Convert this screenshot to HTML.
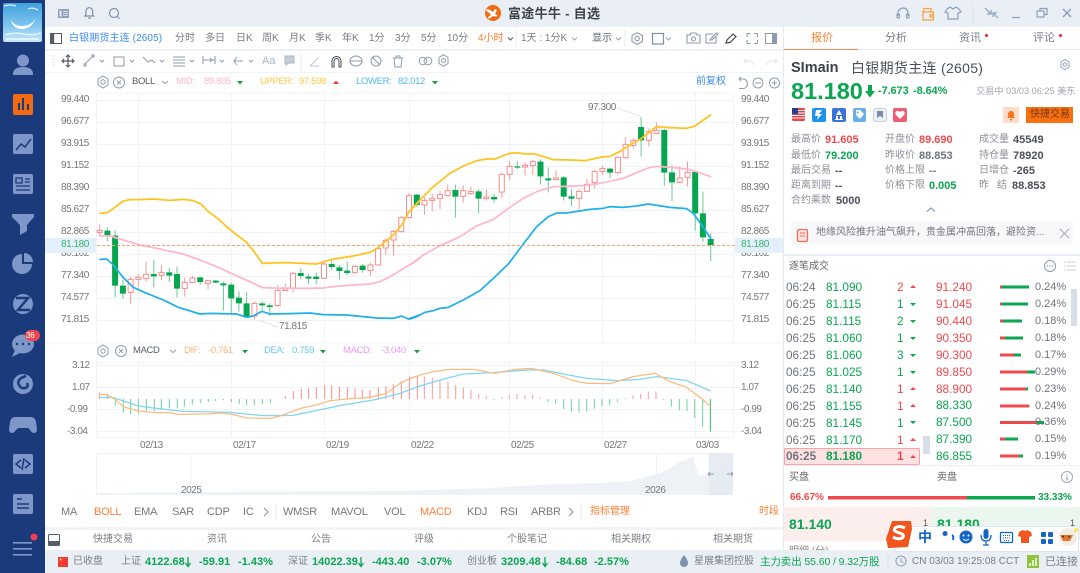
<!DOCTYPE html>
<html><head><meta charset="utf-8"><style>
html,body{margin:0;padding:0}
body{width:1080px;height:573px;overflow:hidden;position:relative;background:#fff;font-family:"Liberation Sans","Noto Sans CJK SC",sans-serif;color:#666;font-size:12px}
.b{position:absolute}
.t{position:absolute;white-space:nowrap;line-height:14px;height:14px}
.ax{font-size:10px;letter-spacing:-.45px;color:#777}
.lb{font-size:9.5px;letter-spacing:-.35px}
.m{font-size:11px;letter-spacing:-.2px}
.g{color:#0aa650}.r{color:#f0494c}.o{color:#ff7f33}
.bd{font-weight:bold}
.tb{font-size:10px;color:#787c85}
.st{font-size:10px;color:#8c9098}
.v{font-size:11px;font-weight:bold;color:#4b505a}
.sb{font-size:10px;color:#7a7f88}
.tm{font-size:11.8px;color:#70757e}
.pc{font-size:11px;color:#70757e}
.d{font-size:11.8px}
</style></head><body>
<div class="b" style="left:0;top:0;width:45px;height:573px;background:#1a3a7c"></div>
<div class="b" style="left:45px;top:0;width:1035px;height:27px;background:#e9eff5"></div>
<div class="b" style="left:45px;top:49px;width:738px;height:1.5px;background:#eef1f5"></div>
<div class="b" style="left:45px;top:72px;width:738px;height:1px;background:#f1f3f6"></div>
<div class="b" style="left:783px;top:27px;width:1px;height:523px;background:#e6eaf0"></div>
<div class="b" style="left:784px;top:49px;width:296px;height:1px;background:#e9ecf1"></div>
<div class="b" style="left:784px;top:49px;width:74px;height:1px;background:#ff8a45"></div>
<div class="b" style="left:784px;top:254px;width:296px;height:1.5px;background:#e9eef6"></div>
<div class="b" style="left:45px;top:527px;width:738px;height:3px;background:#f1f3f6"></div>
<div class="b" style="left:45px;top:550px;width:1035px;height:23px;background:#e9eff5"></div>
<div class="b" style="left:784px;top:465px;width:296px;height:1px;background:#eaedf2"></div>
<div class="b" style="left:784px;top:507px;width:147px;height:34px;background:#fdeeee"></div>
<div class="b" style="left:931px;top:507px;width:149px;height:34px;background:#ebf7ee"></div>
<div class="b" style="left:791px;top:221px;width:282px;height:24px;background:#f7f8fa;border-radius:2px"></div>
<div class="b" style="left:735px;top:238px;width:48px;height:15px;background:#e3f0fb"></div>
<div class="b" style="left:45px;top:238px;width:52px;height:15px;background:#e3f0fb"></div>

<svg class="b" style="left:0;top:0" width="1080" height="573" viewBox="0 0 1080 573" fill="none">
<defs><linearGradient id="sky" x1="0" y1="0" x2="0" y2="1"><stop offset="0" stop-color="#3fa0de"/><stop offset=".55" stop-color="#7cc4ee"/><stop offset="1" stop-color="#c8e6f7"/></linearGradient></defs>
<!-- avatar -->
<rect x="3" y="3" width="39" height="39" rx="2" fill="url(#sky)"/>
<path d="M10 19q4 11 13 10 9-1 13-11-4 7-12 8-9 1-14-7z" fill="#fff"/>
<path d="M4 6q6-2 12 0M28 9q5-2 10 1M5 35q10-3 18-1 9 2 18-1M6 39h33" stroke="#fff" stroke-width="1.4" opacity=".75"/>
<!-- sidebar -->
<g fill="#7d97c8">
<circle cx="23" cy="60.500" r="6"/><path d="M13 75q0-1 0-2 1-6 10-6 9 0 10 6v2z"/>
<rect x="13" y="94" width="20" height="21" rx="2" fill="#f26a12"/>
<rect x="13" y="134" width="20" height="20" rx="2"/>
<rect x="13" y="174" width="20" height="20" rx="2"/>
<path d="M12 214h22v3l-7 8v6l-7 4v-10l-8-8z"/>
<path d="M22 254a10 10 0 1 0 10 10h-10z"/><path d="M24 253v9h9a9 9 0 0 0-9-9z"/>
<circle cx="23" cy="304" r="10"/>
<ellipse cx="23" cy="344" rx="11" ry="9.500"/><path d="M15 350l-3 7 8-4z"/>
<circle cx="23" cy="384" r="10"/>
<path d="M15 417h16q4 0 5 5l1 7q0 4-3 4-2 0-4-3l-2-2h-10l-2 2q-2 3-4 3-3 0-3-4l1-7q1-5 5-5z"/>
<rect x="13" y="454" width="20" height="20" rx="2"/>
<rect x="13" y="494" width="20" height="20" rx="2"/>
<path d="M13 542h19v1.600h-19zM13 548h19v1.600h-19zM13 554h19v1.600h-19z"/>
</g>
<path d="M19 110v-7M23 110v-12M28 110v-6" stroke="#1a3a7c" stroke-width="2"/>
<path d="M16 150l5-6 4 3 6-8" stroke="#1a3a7c" stroke-width="1.500"/>
<path d="M16 178h6v5h-6zM16 186h14M16 190h14M25 179h5M25 182h5" stroke="#1a3a7c" stroke-width="1.300"/>
<path d="M16 298h12l-10 12h12" stroke="#1a3a7c" stroke-width="2.500"/>
<path d="M26 376q-10 3-7 9 2 4 6 3 4-1 2-5" stroke="#1a3a7c" stroke-width="2.500"/>
<circle cx="17" cy="344" r="1.200" fill="#1a3a7c"/><circle cx="23" cy="344" r="1.200" fill="#1a3a7c"/><circle cx="29" cy="344" r="1.200" fill="#1a3a7c"/>
<path d="M21 460l-5 4 5 4M25 460l5 4-5 4M24 458l-2 12" stroke="#1a3a7c" stroke-width="1.500"/>
<path d="M17 499h5M17 504h12M17 508h12" stroke="#1a3a7c" stroke-width="1.500"/>
<circle cx="34" cy="537" r="3.500" fill="#f04050"/>
<rect x="25" y="330" width="15" height="11" rx="5.500" fill="#f0474c"/>
<!-- top bar left icons -->
<g stroke="#7f93ad" stroke-width="1.200">
<rect x="58" y="9" width="11" height="9" fill="#8fa2bb" stroke="none"/><rect x="59.500" y="10.500" width="2" height="6" fill="#e9eff5" stroke="none"/><path d="M63 11.500h5M63 13.500h5M63 15.500h5" stroke="#e9eff5" stroke-width=".8"/>
<path d="M85 16c1-1 1-2 1-5a3.300 3.300 0 0 1 6.600 0c0 3 0 4 1 5zM88 18h3"/>
<circle cx="114" cy="13" r="4.500"/><path d="M117.500 16.500l2 2"/>
</g>
<!-- logo -->
<circle cx="493" cy="13" r="8" fill="#f26a12"/><path d="M487 9q4 1 6 3l2-3 2 1-2 4 3 2q-3 1-5 0l-4 3-1-2 3-2q-2-3-5-4z" fill="#fff"/>
<!-- top right -->
<g stroke="#8ba0bc" stroke-width="1.200">
<path d="M898 16v-3a5 5 0 0 1 10 0v3"/><rect x="897" y="14" width="2.500" height="4" rx="1"/><rect x="906.500" y="14" width="2.500" height="4" rx="1"/>
<path d="M947 9l3-2 3 2 3-2 3 2 2 3-3 1v6h-10v-6l-3-1z"/>
<path d="M985 8l6 6M991 10v4h-4M998 18l-5-5M993 17v-4h4" />
<path d="M1012 17.500h8"/><rect x="1037" y="11" width="7" height="6"/><path d="M1040 11v-2.500h7v6h-3"/>
<path d="M1063 9l8 8M1071 9l-8 8" stroke-width="1.400"/>
</g>
<path d="M973 5v18" stroke="#dbe2ea"/>
<path d="M923 12h10.500v8h-10.500zM923 12l1-3.500 7 0v3.500M930 15h3.500v2h-3.500z" stroke="#f7a23a" stroke-width="1.200"/>
<!-- toolbar 1 -->
<rect x="50.500" y="33.500" width="11" height="10" stroke="#555c66"/><rect x="51" y="34" width="3.200" height="9" fill="#555c66"/>
<path d="M508 37.500l2.500 2.500 2.500-2.500" stroke="#555c66"/>
<path d="M572 37.500l2.500 2.500 2.500-2.500M616 37.500l2.500 2.500 2.500-2.500M666 37.500l2.500 2.500 2.500-2.500" stroke="#9aa5b4"/>
<path d="M516 30v17M625 30v17" stroke="#e5e9ef"/>
<g stroke="#8f9bad" stroke-width="1.100">
<path d="M632 35.500l5-2.800 5.500 2.800v6l-5.500 3-5-3z"/><circle cx="637.200" cy="38.500" r="2.200"/>
<path d="M687 35h3l1-2h5l1 2h3v8h-13z"/><circle cx="693.500" cy="39" r="2"/>
<path d="M706 34h7M706 34v9h10v-6M710 40l6-7 2 1-6 6z"/>
<path d="M747 33.500h3.500M747 33.500v3.500M757.500 33.500h-3.500M757.500 33.500v3.500M747 43.500h3.500M747 43.500v-3.500M757.500 43.500h-3.500M757.500 43.500v-3.500"/>
<path d="M765.500 33.500h11v10h-11z"/><rect x="772" y="34" width="4" height="9" fill="#8f9bad" stroke="none"/>
</g>
<rect x="652.500" y="33.500" width="11" height="10.500" stroke="#7b8ea8" stroke-width="1.200"/>
<path d="M726 43l1-3 6-6 3 2.500-6 6z" stroke="#444b55" stroke-width="1.200"/>
<!-- toolbar 2 -->
<path d="M52 56h3M52 59h3M52 62h3M52 65h3" stroke="#e3e6ea"/>
<g stroke="#555c66" stroke-width="1.200"><path d="M68 55v12M62 61h12"/><path d="M66 57l2-2 2 2M66 65l2 2 2-2M64 59l-2 2 2 2M72 59l2 2-2 2" /></g>
<g stroke="#8f9bad" stroke-width="1">
<path d="M85 64l8-8M84 64h2v2h-2zM92 55h2v2h-2z"/><path d="M100 60l2 2 2-2M130 60l2 2 2-2M160 60l2 2 2-2M190 60l2 2 2-2M220 60l2 2 2-2M249 60l2 2 2-2"/>
<rect x="114" y="57" width="10" height="9"/>
<path d="M143 57l5 5 4-2 3 3" /><path d="M173 57h12M173 60h12M173 63h12M173 66h12"/>
<path d="M203 60h12M203 56v8M215 56v8M210 58l2 2-2 2"/><path d="M243 61h-9l3-4M234 61l3 4"/>
<path d="M285 56h9v7h-5l-3 2v-2h-1z" fill="#c5cdd8" stroke="#aab5c4"/>
<path d="M301 53v18" stroke="#e5e9ef"/>
<path d="M310 66l8-8M310 66h9" stroke="#bfc7d2"/>
<path d="M332 67v-6a4.500 4.500 0 0 1 9 0v6h-2v-6a2.500 2.500 0 0 0-5 0v6z" stroke="#444b55"/>
<ellipse cx="356" cy="61" rx="6" ry="5"/><path d="M350 61h12"/>
<circle cx="376" cy="61" r="5"/><path d="M372 57l8 8"/>
<path d="M394 58h8l-1 9h-6zM393 58h10M396 58v-2h4v2"/>
<circle cx="423" cy="61" r="3.800"/><circle cx="428" cy="61" r="3.800"/>
<path d="M439 57.500l4.500-2.800 4.500 2.800v6l-4.500 2.800-4.500-2.800z"/><circle cx="443.500" cy="60.500" r="2"/>
</g>
<path d="M746 63l-2-2 2-2M744 61h6q3 0 4 4M775 63l2-2-2-2M777 61h-6q-3 0-4 4" stroke="#e3e6ea" stroke-width="1.200"/>
<!-- boll row icons -->
<g stroke="#8f9bad" stroke-width="1">
<path d="M98 79l5-3 5 3v6l-5 3-5-3z"/><circle cx="103" cy="82" r="2.200"/>
<circle cx="119" cy="82.500" r="5.500"/><path d="M117 80.500l4 4M121 80.500l-4 4"/>
<path d="M162 81l3 2.500 3-2.500"/>
<path d="M739 79h5a5 5 0 0 1 0 9.500h-5M741 77l-2 2 2 2" />
<circle cx="758" cy="83" r="5"/><path d="M755 83h6"/>
<circle cx="774.500" cy="83" r="5"/><path d="M772 83h5M774.500 80.500v5"/>
</g>
<path d="M237 81h6l-3 3.500z" fill="#1a9c3a"/><path d="M333 84h6l-3-3.500z" fill="#ef3b3b"/><path d="M432 81h6l-3 3.500z" fill="#1a9c3a"/>

<!-- main chart grid -->
<g stroke="#eff3f8">
<path d="M96.500 93H733M96.500 100.500H733M96.500 122.500H733M96.500 144.500H733M96.500 166.500H733M96.500 188.500H733M96.500 210.500H733M96.500 232.500H733M96.500 254.500H733M96.500 276.500H733M96.500 298.500H733M96.500 320.500H733"/>
<path d="M96.500 93V343M138.500 93V343M231.500 93V343M324.500 93V343M409.500 93V343M509.500 93V343M602.500 93V343M695.500 93V343M733.500 93V343"/>
<path d="M96.500 362H741M96.500 365.500H741M96.500 387.500H741M96.500 409.500H741M96.500 431.500H741M96.500 437.500H733"/>
<path d="M96.500 362V437M138.500 362V437M231.500 362V437M324.500 362V437M409.500 362V437M509.500 362V437M602.500 362V437M695.500 362V437M733.500 362V437"/>
</g>
<path d="M45 343H783" stroke="#f1f3f6"/>
<!-- mini chart -->
<path d="M96.500 453.500H733M96.500 453V495M191 453V487M656.500 453V486" stroke="#eef1f5"/>
<path d="M96 493L200 492 400 491 490 488 520 486 560 484 600 483 630 481 650 476 660 473 670 468 680 462 688 459 693 456 696 468 699 476 709 473 720 470 733 466V495H96z" fill="#eef2f7"/>
<rect x="709" y="453" width="24" height="42" fill="#e4e9f0" opacity=".85"/>
<path d="M708 474h6M708 474l2-2M708 474l2 2M727 474h6M733 474l-2-2M733 474l-2 2" stroke="#8a9fb8" stroke-width=".9"/>
<!-- candles -->
<g transform="translate(0 90) scale(1 .33333)">
<path stroke="#f89a9a" d="M99.7 403V440M130.600 560V642M138.300 552V592M146.100 515V575M161.500 525V570M184.700 563V620M192.500 558V580M208 570V598M254.400 634V690M277.600 585V650M285.300 580V603M293 546V608M324 518V567M354.900 525V553M370.400 518V557M378.100 472V527M385.800 445V495M393.600 420V498M401.300 378V427M409 310V385M424.500 322V374M432.200 310V364M440 302V357M447.700 283V320M463.200 286V338M470.900 290V315M486.400 298V332M501.800 247V323M509.600 212V270M525 218V257M532.800 210V255M556 241V272M579.200 298V360M586.900 267V306M594.700 240V295M602.400 228V255M617.900 198V253M625.600 142V206M633.300 145V175M648.800 115V170M656.500 98V132M679.700 230V280M687.500 215V290"/>
<path fill="#fff" stroke="#f58d8d" vector-effect="non-scaling-stroke" d="M97.200 421h5V427h-5zM128.100 568h5V607h-5zM135.800 562h5V568h-5zM143.600 553h5V565h-5zM159 547h5V556h-5zM182.200 577h5V595h-5zM190 564h5V577h-5zM205.500 572h5V580h-5zM251.900 640h5V678h-5zM275.100 601h5V647h-5zM282.800 597h5V602h-5zM290.500 550h5V595h-5zM321.500 522h5V565h-5zM352.400 529h5V547h-5zM367.900 525h5V541h-5zM375.600 476h5V525h-5zM383.300 451h5V474h-5zM391.100 424h5V450h-5zM398.800 383h5V425h-5zM406.500 317h5V383h-5zM422 332h5V345h-5zM429.700 325h5V331h-5zM437.500 314h5V325h-5zM445.200 302h5V317h-5zM460.700 302h5V319h-5zM468.400 305h5V311h-5zM483.900 321h5V326h-5zM499.300 253h5V306h-5zM507.100 229h5V253h-5zM522.500 226h5V231h-5zM530.300 215h5V227h-5zM553.500 264h5V269h-5zM576.700 304h5V325h-5zM584.400 283h5V304h-5zM592.200 244h5V278h-5zM599.900 236h5V244h-5zM615.400 202h5V248h-5zM623.100 163h5V203h-5zM630.800 152h5V166h-5zM646.300 125h5V151h-5zM654 121h5V130h-5zM677.200 264h5V277h-5zM685 247h5V262h-5z"/>
<path stroke="#6cc992" d="M107.400 412V455M115.100 420V622M122.900 570V627M153.800 510V592M169.300 533V576M177 530V622M200.200 560V585M215.700 570V580M223.400 574V662M231.200 578V670M238.900 604V665M246.600 606V682M262.100 634V660M269.800 640V677M300.800 534V568M308.500 552V583M316.200 548V582M331.700 510V540M339.400 525V568M347.200 515V557M362.600 522V548M416.800 312V350M455.400 284V383M478.600 298V370M494.100 312V338M517.300 214V237M540.500 208V283M548.300 232V307M563.700 258V332M571.500 298V348M610.100 234V265M641.100 80V200M664.300 116V288M672 225V333M695.200 242V422M702.900 305V456M710.700 430V513"/>
<path fill="#05a64f" d="M104.400 422h6V436h-6zM112.100 437h6V587h-6zM119.900 587h6V611h-6zM150.800 552h6V559h-6zM166.300 547h6V557h-6zM174 552h6V596h-6zM197.200 562h6V576h-6zM212.700 572h6V578h-6zM220.400 580h6V586h-6zM228.200 584h6V625h-6zM235.900 623h6V640h-6zM243.600 640h6V680h-6zM259.100 640h6V646h-6zM266.800 646h6V651h-6zM297.800 549h6V558h-6zM305.500 560h6V566h-6zM313.200 560h6V567h-6zM328.700 522h6V531h-6zM336.400 532h6V543h-6zM344.200 542h6V549h-6zM359.600 527h6V540h-6zM413.800 314h6V345h-6zM452.400 300h6V320h-6zM475.600 304h6V326h-6zM491.100 321h6V328h-6zM514.300 229h6V233h-6zM537.500 215h6V259h-6zM545.300 265h6V271h-6zM560.700 262h6V320h-6zM568.500 319h6V326h-6zM607.100 236h6V248h-6zM638.100 111h6V151h-6zM661.300 120h6V248h-6zM669 247h6V277h-6zM692.200 246h6V370h-6zM699.900 370h6V442h-6zM707.700 447h6V465h-6z"/>
</g>
<!-- boll lines -->
<g stroke-width="5.200" stroke-linejoin="round" stroke-linecap="round" transform="translate(90 90) scale(.33333)">
<polyline stroke="#ffb6cb" points="30,438 60,438 100,450 150,465 200,475 280,492 330,510 380,530 430,553 480,575 517,593 545,594 640,595 700,594 730,590 790,585 840,582 870,575 900,560 950,530 990,505"/>
<polyline stroke="#fec31d" points="30,370 52,368 75,352 100,333 120,329 150,329 190,327 240,331 280,328 310,332 333,342 355,365 380,383 410,410 440,435 470,457 490,482 517,520 545,519 590,518 680,522 725,508 790,498 840,487 860,476 890,452 910,435 935,405 957,365 985,337"/>
<polyline stroke="#1fb0ea" points="30,508 50,507 70,525 100,563 130,592 170,610 220,630 265,652 330,672 360,670 440,672 470,682 490,678 515,664 540,672 600,671 660,669 700,674 770,675 860,684 910,685 935,678 955,687 990,675"/>
</g>
<g stroke-width="5.200" stroke-linejoin="round" stroke-linecap="round" transform="translate(410 90) scale(.33333)">
<polyline stroke="#ffb6cb" points="0,525 40,495 90,467 150,440 200,408 250,388 300,352 340,325 385,303 430,290 470,289 520,287 570,280 640,265 680,248 720,232 745,229 790,233 830,237 860,245 902,260"/>
<polyline stroke="#fec31d" points="0,362 30,330 70,290 120,250 160,228 200,212 230,207 255,207 298,190 320,188 345,192 370,191 395,198 430,209 480,210 525,212 575,201 600,199 625,187 660,165 690,148 715,130 739,110 780,113 830,115 855,108 880,90 902,75"/>
<polyline stroke="#1fb0ea" points="0,687 20,680 45,667 70,662 90,655 115,652 160,630 210,602 250,565 295,522 340,462 380,410 415,380 440,369 470,369 540,358 580,355 600,350 640,352 680,348 715,342 780,352 830,356 850,370 875,405 902,445"/>
</g>
<path d="M97 245.500H735" stroke="#f4a36c" stroke-dasharray="3 2"/>
<path d="M617 108L640 116M258 320L278 327" stroke="#e2e5e9"/>
<!-- macd -->
<g stroke="#8f9bad" stroke-width="1">
<path d="M98 348l5-3 5 3v6l-5 3-5-3z"/><circle cx="103" cy="351" r="2.200"/>
<circle cx="121" cy="351" r="5.500"/><path d="M119 349l4 4M123 349l-4 4"/>
<path d="M170 350l3 2.500 3-2.500"/>
</g>
<path d="M242 350h6l-3 3.500zM320 350h6l-3 3.500zM414 350h6l-3 3.500z" fill="#1a9c3a"/>
<g transform="translate(50 340) scale(.33333)" stroke-width="3">
<path stroke="#f98b8b" d="M148 157V177M172 165V177M706 168V177M730 153V177M754 146V177M776 145V177M799 142V177M824 136V177M845 136V177M868 139V177M892 142V177M915 145V177M937 149V177M960 150V177M985 142V177M1008 139V177M1030 133V177M1054 123V177M1078 110V177M1102 110V177"/>
<path stroke="#6cd09a" d="M196 177V197M220 177V218M242 177V223M265 177V220M289 177V217M313 177V213M334 177V208M358 177V205M382 177V205M403 177V200M427 177V194M451 177V189M475 177V186M496 177V183M520 177V181M544 177V186M568 177V191M590 177V196M613 177V196M637 177V193M661 177V190"/>
<polyline stroke-width="3.800" stroke="#7fd4f0" points="148,172 190,173 265,198 320,205 400,214 540,217 640,227 730,226 820,207 880,195 980,178 1050,160 1110,138"/>
<polyline stroke-width="3.800" stroke="#fdbb80" points="148,163 172,164 195,178 220,200 265,213 320,218 360,218 380,223 480,222 510,219 550,224 590,234 660,235 690,228 730,213 760,203 800,195 840,182 890,177 960,172 1010,160 1050,130 1080,115 1110,106"/>
</g>
<g transform="translate(420 340) scale(.33333)" stroke-width="3">
<path stroke="#fa9a9a" d="M13 110V177M37 113V177M60 120V177M84 125V177M107 135V177M130 142V177M153 150V177M176 162V177M199 168V177M245 172V177M268 165V177M291 162V177M315 165V177M338 165V177M361 173V177M616 174V177M639 166V177M662 162V177M685 155V177M708 154V177"/>
<path stroke="#6cd09a" d="M222 177V180M384 177V186M407 177V192M431 177V207M454 177V215M477 177V218M500 177V215M523 177V206M546 177V198M569 177V196M592 177V186M731 177V180M754 177V200M778 177V211M801 177V213M824 177V234M848 177V260"/>
<path stroke="#2fb96a" d="M871 177V275"/>
<polyline stroke-width="3.800" stroke="#7fd4f0" points="0,138 60,120 130,102 220,98 320,90 370,90 430,102 500,115 590,122 660,118 710,110 800,122 872,153"/>
<polyline stroke-width="3.800" stroke="#fdbb80" points="0,105 40,95 90,88 160,88 225,100 285,88 335,85 400,100 460,122 500,130 530,130 570,131 640,110 705,100 750,125 800,142 850,180 872,200"/>
</g>
<!-- bottom tab bar -->
<path d="M276 504v16M581 504v16" stroke="#e4e8ee"/>
<path d="M264 508l4 4-4 4M569 508l4 4-4 4" stroke="#8f9bad" stroke-width="1.200"/>
<rect x="48.500" y="534.500" width="11" height="11" rx="1" stroke="#555c66"/><rect x="49" y="541" width="10" height="4" fill="#555c66"/>
<!-- status bar -->
<rect x="58" y="557" width="10" height="10" fill="#ee3b35"/><circle cx="60.500" cy="559.500" r="1" fill="#fdd835"/>
<path d="M684 555q4 5 4 8a4 4 0 0 1-8 0q0-3 4-8z" fill="#7f93ad"/>
<path d="M888 554v16" stroke="#d9e0e8"/>
<circle cx="901" cy="561" r="5" stroke="#8fa2bb" stroke-width="1.100"/><path d="M901 558v3.500l2.500 1" stroke="#8fa2bb"/>
<rect x="1027" y="555" width="12" height="13" fill="#8fc33a"/><path d="M1030 566v-3M1033 566v-6M1036 566v-8" stroke="#fff" stroke-width="1.500"/>
<path d="M188 557v9M185.500 563l2.500 3.500 2.500-3.500M361 557v9M358.500 563l2.500 3.500 2.500-3.500M545 557v9M542.500 563l2.500 3.500 2.500-3.500" stroke="#0aa650" stroke-width="1.300"/>
<!-- right panel -->
<path d="M1061 62l4-2.500 4 2.500v5l-4 2.500-4-2.500z" stroke="#9aa5b4"/><circle cx="1065" cy="64.500" r="1.800" stroke="#9aa5b4"/>
<path d="M868 85h4v6h3l-5 6.500-5-6.500h3z" fill="#0aa650"/>
<!-- flag -->
<rect x="792" y="108" width="13" height="13" rx="1.500" fill="#e8424a"/><path d="M792 110.500h13M792 113h13M792 115.500h13M792 118h13" stroke="#fff" stroke-width=".9"/><rect x="792" y="108" width="6" height="6" fill="#28408f"/>
<rect x="812" y="108" width="14" height="14" rx="2" fill="#1c94ee"/><path d="M816 110h6l-3 4h3l-5 6 1-4h-3z" fill="#fff"/>
<rect x="832" y="108" width="14" height="14" rx="2" fill="#3b72d9"/><path d="M839 110l3 5h-6zM836 116h2v3h-2zM840 116h2v3h-2zM835 119h8v1h-8z" fill="#fff"/>
<rect x="853" y="108" width="13" height="14" rx="2" fill="#6aaee8"/><path d="M856 110h4l4 4-4 5-4-4z" fill="#fff"/><circle cx="858" cy="112.500" r="1" fill="#6aaee8"/>
<rect x="873.500" y="108.500" width="13" height="13" rx="2" fill="#eef1f6" stroke="#c7cfdb"/><path d="M877 111h6v7l-3-2-3 2z" fill="#7b8ea8"/>
<rect x="893" y="108" width="14" height="14" rx="2" fill="#f25c73"/><path d="M900 119l-4-4q-1.500-2 0-3.500 2-1.500 4 .5 2-2 4-.5 1.500 1.500 0 3.500z" fill="#fff"/>
<rect x="1003" y="107" width="16" height="16" fill="#ffdcc9"/><path d="M1007 118c1-1 1-2 1-4a3 3 0 0 1 6 0c0 2 0 3 1 4zM1010 119h2v1.500h-2z" fill="#f5751d"/>
<rect x="1026" y="107" width="47" height="16" fill="#f77012"/>
<path d="M927 211.500l4-3.500 4 3.500" stroke="#8fa2bb" stroke-width="1.400"/>
<rect x="797.500" y="229.500" width="10" height="12" rx="1.500" fill="#fbe3df" stroke="#f26b5b" stroke-width="1.300"/><path d="M800 233h5M800 236h5" stroke="#f26b5b"/>
<path d="M1060 229l9 9M1069 229l-9 9" stroke="#a8b1bd" stroke-width="1.200"/>
<circle cx="1050" cy="266" r="5.500" stroke="#8f9bad"/><circle cx="1047.500" cy="266" r=".7" fill="#8f9bad"/><circle cx="1050" cy="266" r=".7" fill="#8f9bad"/><circle cx="1052.500" cy="266" r=".7" fill="#8f9bad"/>
<path d="M1067 262h9M1067 266h9M1067 270h9M1064 262h1.500M1064 266h1.500M1064 270h1.500" stroke="#c4ccd6"/>
<!-- trade triangles -->
<path d="M910 288h6l-3-3zM910 441h6l-3-3zM910 390h6l-3-3zM910 407h6l-3-3z" fill="#f0494c"/>
<path d="M910 303h6l-3 3zM910 320h6l-3 3zM910 337h6l-3 3zM910 354h6l-3 3zM910 371h6l-3 3zM910 421h6l-3 3z" fill="#0aa650"/>
<rect x="784.500" y="448.500" width="135" height="16" rx="1" fill="#ffe1e1" stroke="#f9a3a3"/>
<path d="M910 458h6l-3-3z" fill="#f0494c"/>
<rect x="1071" y="289" width="6" height="37" fill="#d8dee7"/><rect x="923" y="436" width="7" height="18" fill="#d8dee7"/>
<!-- bars -->
<g stroke-width="3">
<path stroke="#f0494c" d="M1000 287h2M1000 304h2M1000 321h3M1000 338h5M1000 355h14M1000 372h27M1000 389h26M1000 406h29M1000 422.500h37M1000 439h5M1000 456h19"/>
<path stroke="#0aa650" d="M1002 287h27M1002 304h26M1003 321h19M1005 338h18M1014 355h7M1027 372h8M1026 389h2M1037 422.500h7M1005 439h13M1019 456h4"/>
<path stroke="#c7ced8" d="M1029 406h1"/>
</g>
<circle cx="1067" cy="477" r="5.500" stroke="#a0aab7"/><path d="M1067 475v.6M1067 476.500v4" stroke="#8f9bad" stroke-width="1.200"/>
<rect x="828" y="496" width="139" height="3.500" fill="#f0494c"/><rect x="967" y="496" width="68" height="3.500" fill="#0aa650"/>
</svg>

<!-- top title -->
<div class="t bd" style="left:508px;top:7px;font-size:13px;color:#3d434c;letter-spacing:.3px">富途牛牛 - 自选</div>
<div class="t" style="left:26px;top:329px;font-size:8px;color:#fff;line-height:13px;letter-spacing:-.2px">36</div>
<!-- toolbar -->
<div class="t" style="left:69px;top:32px;font-size:10px;color:#3f8bf5;letter-spacing:.12px">白银期货主连 (2605)</div>
<div class="t tb" style="left:175px;top:32px">分时</div>
<div class="t tb" style="left:205px;top:32px">多日</div>
<div class="t tb" style="left:236px;top:32px">日K</div>
<div class="t tb" style="left:262px;top:32px">周K</div>
<div class="t tb" style="left:289px;top:32px">月K</div>
<div class="t tb" style="left:315px;top:32px">季K</div>
<div class="t tb" style="left:342px;top:32px">年K</div>
<div class="t tb" style="left:369px;top:32px">1分</div>
<div class="t tb" style="left:395px;top:32px">3分</div>
<div class="t tb" style="left:421px;top:32px">5分</div>
<div class="t tb" style="left:447px;top:32px">10分</div>
<div class="t tb" style="left:478px;top:32px;color:#ff7f33">4小时</div>
<div class="t tb" style="left:521px;top:32px">1天 : 1分K</div>
<div class="t tb" style="left:592px;top:32px;color:#5d636d">显示</div>
<div class="t" style="left:262px;top:54px;font-size:11px;color:#aab5c4">Aa</div>
<!-- boll -->
<div class="t lb" style="left:132px;top:75px;color:#555b64">BOLL</div>
<div class="t lb" style="left:176px;top:75px;color:#ffb6cb">MID:</div>
<div class="t lb" style="left:204px;top:75px;color:#ffb6cb">89.805</div>
<div class="t lb" style="left:260px;top:75px;color:#fec94a">UPPER:</div>
<div class="t lb" style="left:299px;top:75px;color:#fec94a">97.598</div>
<div class="t lb" style="left:356px;top:75px;color:#4fbdec">LOWER:</div>
<div class="t lb" style="left:398px;top:75px;color:#4fbdec">82.012</div>
<div class="t" style="left:696px;top:75px;font-size:10px;color:#3f8bf5">前复权</div>
<!-- left axis -->
<div class="t ax" style="left:61px;top:93px">99.440</div>
<div class="t ax" style="left:61px;top:115px">96.677</div>
<div class="t ax" style="left:61px;top:137px">93.915</div>
<div class="t ax" style="left:61px;top:159px">91.152</div>
<div class="t ax" style="left:61px;top:181px">88.390</div>
<div class="t ax" style="left:61px;top:203px">85.627</div>
<div class="t ax" style="left:61px;top:225px">82.865</div>
<div class="t ax" style="left:61px;top:238px;color:#3cb371">81.180</div>
<div class="t ax" style="left:61px;top:253px;height:7px;line-height:2px;overflow:hidden">80.102</div>
<div class="t ax" style="left:61px;top:269px">77.340</div>
<div class="t ax" style="left:61px;top:291px">74.577</div>
<div class="t ax" style="left:61px;top:313px">71.815</div>
<!-- right axis -->
<div class="t ax" style="left:741px;top:93px">99.440</div>
<div class="t ax" style="left:741px;top:115px">96.677</div>
<div class="t ax" style="left:741px;top:137px">93.915</div>
<div class="t ax" style="left:741px;top:159px">91.152</div>
<div class="t ax" style="left:741px;top:181px">88.390</div>
<div class="t ax" style="left:741px;top:203px">85.627</div>
<div class="t ax" style="left:741px;top:225px">82.865</div>
<div class="t ax" style="left:741px;top:238px;color:#3cb371">81.180</div>
<div class="t ax" style="left:741px;top:253px;height:7px;line-height:2px;overflow:hidden">80.102</div>
<div class="t ax" style="left:741px;top:269px">77.340</div>
<div class="t ax" style="left:741px;top:291px">74.577</div>
<div class="t ax" style="left:741px;top:313px">71.815</div>
<div class="t ax" style="left:588px;top:101px">97.300</div>
<div class="t ax" style="left:279px;top:320px">71.815</div>
<!-- macd labels -->
<div class="t lb" style="left:133px;top:344px;color:#555b64">MACD</div>
<div class="t lb" style="left:184px;top:344px;color:#fdb27a">DIF:</div>
<div class="t lb" style="left:208px;top:344px;color:#fdb27a">-0.761</div>
<div class="t lb" style="left:264px;top:344px;color:#66c8ee">DEA:</div>
<div class="t lb" style="left:292px;top:344px;color:#66c8ee">0.759</div>
<div class="t lb" style="left:343px;top:344px;color:#f09ae8">MACD:</div>
<div class="t lb" style="left:381px;top:344px;color:#f09ae8">-3.040</div>
<div class="t ax" style="left:72px;top:359px">3.12</div>
<div class="t ax" style="left:72px;top:381px">1.07</div>
<div class="t ax" style="left:67px;top:403px">-0.99</div>
<div class="t ax" style="left:67px;top:425px">-3.04</div>
<div class="t ax" style="left:741px;top:359px">3.12</div>
<div class="t ax" style="left:741px;top:381px">1.07</div>
<div class="t ax" style="left:741px;top:403px">-0.99</div>
<div class="t ax" style="left:741px;top:425px">-3.04</div>
<div class="t ax" style="left:140px;top:439px">02/13</div>
<div class="t ax" style="left:233px;top:439px">02/17</div>
<div class="t ax" style="left:326px;top:439px">02/19</div>
<div class="t ax" style="left:411px;top:439px">02/22</div>
<div class="t ax" style="left:511px;top:439px">02/25</div>
<div class="t ax" style="left:604px;top:439px">02/27</div>
<div class="t ax" style="left:696px;top:439px">03/03</div>
<div class="t ax" style="left:181px;top:484px">2025</div>
<div class="t ax" style="left:645px;top:484px">2026</div>
<!-- indicators -->
<div class="t m" style="left:61px;top:505px;color:#777">MA</div>
<div class="t m o" style="left:94px;top:505px">BOLL</div>
<div class="t m" style="left:134px;top:505px;color:#777">EMA</div>
<div class="t m" style="left:172px;top:505px;color:#777">SAR</div>
<div class="t m" style="left:207px;top:505px;color:#777">CDP</div>
<div class="t m" style="left:243px;top:505px;color:#777">IC</div>
<div class="t m" style="left:283px;top:505px;color:#777">WMSR</div>
<div class="t m" style="left:331px;top:505px;color:#777">MAVOL</div>
<div class="t m" style="left:384px;top:505px;color:#777">VOL</div>
<div class="t m o" style="left:420px;top:505px">MACD</div>
<div class="t m" style="left:467px;top:505px;color:#777">KDJ</div>
<div class="t m" style="left:500px;top:505px;color:#777">RSI</div>
<div class="t m" style="left:531px;top:505px;color:#777">ARBR</div>
<div class="t o" style="left:590px;top:505px;font-size:10px">指标管理</div>
<div class="t o" style="left:759px;top:505px;font-size:10px">时段</div>
<!-- tabs -->
<div class="t sb" style="left:93px;top:533px">快捷交易</div>
<div class="t sb" style="left:207px;top:533px">资讯</div>
<div class="t sb" style="left:311px;top:533px">公告</div>
<div class="t sb" style="left:414px;top:533px">评级</div>
<div class="t sb" style="left:507px;top:533px">个股笔记</div>
<div class="t sb" style="left:611px;top:533px">相关期权</div>
<div class="t sb" style="left:713px;top:533px">相关期货</div>
<!-- status -->
<div class="t sb" style="left:73px;top:555px">已收盘</div>
<div class="t sb" style="left:121px;top:555px">上证</div>
<div class="t bd g" style="left:145px;top:555px;font-size:11px">4122.68</div>
<div class="t bd g" style="left:199px;top:555px;font-size:11px">-59.91</div>
<div class="t bd g" style="left:238px;top:555px;font-size:11px">-1.43%</div>
<div class="t sb" style="left:288px;top:555px">深证</div>
<div class="t bd g" style="left:312px;top:555px;font-size:11px">14022.39</div>
<div class="t bd g" style="left:372px;top:555px;font-size:11px">-443.40</div>
<div class="t bd g" style="left:417px;top:555px;font-size:11px">-3.07%</div>
<div class="t sb" style="left:467px;top:555px">创业板</div>
<div class="t bd g" style="left:501px;top:555px;font-size:11px">3209.48</div>
<div class="t bd g" style="left:556px;top:555px;font-size:11px">-84.68</div>
<div class="t bd g" style="left:594px;top:555px;font-size:11px">-2.57%</div>
<div class="t sb" style="left:694px;top:555px">星展集团控股</div>
<div class="t g" style="left:760px;top:555px;font-size:10.500px;letter-spacing:-.1px">主力卖出 55.60 / 9.32万股</div>
<div class="t sb" style="left:912px;top:555px;font-size:10px">CN 03/03 19:25:08 CCT</div>
<div class="t sb" style="left:1045px;top:555px;font-size:11px">已连接</div>
<!-- right panel -->
<div class="t o" style="left:811px;top:31px;font-size:11px">报价</div>
<div class="t sb" style="left:885px;top:31px;font-size:11px">分析</div>
<div class="t sb" style="left:959px;top:31px;font-size:11px">资讯</div>
<div class="b" style="left:985px;top:34px;width:3px;height:3px;border-radius:50%;background:#f0202a"></div>
<div class="t sb" style="left:1033px;top:31px;font-size:11px">评论</div>
<div class="b" style="left:1059px;top:34px;width:3px;height:3px;border-radius:50%;background:#f0202a"></div>
<div class="t bd" style="left:791px;top:61px;font-size:14.500px;color:#3c424c">SImain</div>
<div class="t" style="left:851px;top:61px;font-size:14px;color:#4b505a;letter-spacing:.3px">白银期货主连 (2605)</div>
<div class="t bd g" style="left:791px;top:83px;font-size:23.500px;line-height:16px;height:16px">81.180</div>
<div class="t bd g" style="left:878px;top:84px;font-size:11px;letter-spacing:-.1px">-7.673</div>
<div class="t bd g" style="left:913px;top:84px;font-size:11px;letter-spacing:-.1px">-8.64%</div>
<div class="t" style="left:976px;top:84px;font-size:9.200px;color:#a2a7af">交易中 03/03 06:25 美东</div>
<div class="t" style="left:1030px;top:108px;font-size:10px;color:#7a3b0c">快捷交易</div>
<!-- stats -->
<div class="t st" style="left:791px;top:133px">最高价</div><div class="t v" style="left:825px;top:133px;color:#f0494c">91.605</div>
<div class="t st" style="left:885px;top:133px">开盘价</div><div class="t v" style="left:919px;top:133px;color:#f0494c">89.690</div>
<div class="t st" style="left:979px;top:133px">成交量</div><div class="t v" style="left:1013px;top:133px">45549</div>
<div class="t st" style="left:791px;top:149px">最低价</div><div class="t v" style="left:825px;top:149px;color:#0aa650">79.200</div>
<div class="t st" style="left:885px;top:149px">昨收价</div><div class="t v" style="left:919px;top:149px;color:#70757e">88.853</div>
<div class="t st" style="left:979px;top:149px">持仓量</div><div class="t v" style="left:1013px;top:149px">78920</div>
<div class="t st" style="left:791px;top:164px">最后交易</div><div class="t v" style="left:835px;top:164px">--</div>
<div class="t st" style="left:885px;top:164px">价格上限</div><div class="t v" style="left:929px;top:164px;color:#70757e">--</div>
<div class="t st" style="left:979px;top:164px">日增仓</div><div class="t v" style="left:1013px;top:164px">-265</div>
<div class="t st" style="left:791px;top:179px">距离到期</div><div class="t v" style="left:835px;top:179px">--</div>
<div class="t st" style="left:885px;top:179px">价格下限</div><div class="t v" style="left:929px;top:179px;color:#0aa650">0.005</div>
<div class="t st" style="left:979px;top:179px">昨</div><div class="t st" style="left:997px;top:179px">结</div><div class="t v" style="left:1012px;top:179px">88.853</div>
<div class="t st" style="left:791px;top:194px">合约乘数</div><div class="t v" style="left:836px;top:194px">5000</div>
<div class="t" style="left:816px;top:226px;font-size:10px;color:#70757e">地缘风险推升油气飙升，贵金属冲高回落，避险资...</div>
<div class="t" style="left:789px;top:260px;font-size:10px;color:#666">逐笔成交</div>
<!-- trades -->
<div class="t tm" style="left:786px;top:280px">06:24</div><div class="t d g" style="left:826px;top:280px">81.090</div><div class="t d r" style="left:897px;top:280px">2</div><div class="t d r" style="left:936px;top:280px">91.240</div><div class="t pc" style="left:1035px;top:280px">0.24%</div>
<div class="t tm" style="left:786px;top:297px">06:25</div><div class="t d g" style="left:826px;top:297px">81.115</div><div class="t d g" style="left:897px;top:297px">1</div><div class="t d r" style="left:936px;top:297px">91.045</div><div class="t pc" style="left:1035px;top:297px">0.24%</div>
<div class="t tm" style="left:786px;top:314px">06:25</div><div class="t d g" style="left:826px;top:314px">81.115</div><div class="t d g" style="left:897px;top:314px">2</div><div class="t d r" style="left:936px;top:314px">90.440</div><div class="t pc" style="left:1035px;top:314px">0.18%</div>
<div class="t tm" style="left:786px;top:331px">06:25</div><div class="t d g" style="left:826px;top:331px">81.060</div><div class="t d g" style="left:897px;top:331px">1</div><div class="t d r" style="left:936px;top:331px">90.350</div><div class="t pc" style="left:1035px;top:331px">0.18%</div>
<div class="t tm" style="left:786px;top:348px">06:25</div><div class="t d g" style="left:826px;top:348px">81.060</div><div class="t d g" style="left:897px;top:348px">3</div><div class="t d r" style="left:936px;top:348px">90.300</div><div class="t pc" style="left:1035px;top:348px">0.17%</div>
<div class="t tm" style="left:786px;top:365px">06:25</div><div class="t d g" style="left:826px;top:365px">81.025</div><div class="t d g" style="left:897px;top:365px">1</div><div class="t d r" style="left:936px;top:365px">89.850</div><div class="t pc" style="left:1035px;top:365px">0.29%</div>
<div class="t tm" style="left:786px;top:382px">06:25</div><div class="t d g" style="left:826px;top:382px">81.140</div><div class="t d r" style="left:897px;top:382px">1</div><div class="t d r" style="left:936px;top:382px">88.900</div><div class="t pc" style="left:1035px;top:382px">0.23%</div>
<div class="t tm" style="left:786px;top:399px">06:25</div><div class="t d g" style="left:826px;top:399px">81.155</div><div class="t d r" style="left:897px;top:399px">1</div><div class="t d g" style="left:936px;top:398px">88.330</div><div class="t pc" style="left:1035px;top:399px">0.24%</div>
<div class="t tm" style="left:786px;top:416px">06:25</div><div class="t d g" style="left:826px;top:416px">81.145</div><div class="t d g" style="left:897px;top:416px">1</div><div class="t d g" style="left:936px;top:415px">87.500</div><div class="t pc" style="left:1035px;top:415px">0.36%</div>
<div class="t tm" style="left:786px;top:433px">06:25</div><div class="t d g" style="left:826px;top:433px">81.170</div><div class="t d r" style="left:897px;top:433px">1</div><div class="t d g" style="left:936px;top:432px">87.390</div><div class="t pc" style="left:1035px;top:432px">0.15%</div>
<div class="t tm bd" style="left:786px;top:449px">06:25</div><div class="t d g bd" style="left:826px;top:449px">81.180</div><div class="t d r bd" style="left:897px;top:449px">1</div><div class="t d g" style="left:936px;top:449px">86.855</div><div class="t pc" style="left:1035px;top:449px">0.19%</div>
<!-- buy/sell -->
<div class="t" style="left:789px;top:471px;font-size:10px;color:#666">买盘</div>
<div class="t" style="left:937px;top:471px;font-size:10px;color:#666">卖盘</div>
<div class="t bd r" style="left:790px;top:491px;font-size:10px">66.67%</div>
<div class="t bd g" style="left:1038px;top:491px;font-size:10px">33.33%</div>
<div class="t bd g" style="left:789px;top:517px;font-size:14px">81.140</div>
<div class="t" style="left:923px;top:516px;font-size:9px;color:#555">1</div>
<div class="t bd g" style="left:937px;top:517px;font-size:14px">81.180</div>
<div class="t" style="left:1070px;top:516px;font-size:9px;color:#555">1</div>
<div class="t" style="left:789px;top:545px;height:5px;overflow:hidden;font-size:10px;color:#888">明细 (分)</div>
<!-- sogou bar -->
<div class="b" style="left:895px;top:526px;width:182px;height:24px;background:#fff;border:1px solid #dde6f2;border-radius:2px"></div>
<svg class="b" style="left:885px;top:520px" width="195" height="32" viewBox="885 520 195 32" fill="none">
<path d="M892 521h19l1 8-4 18-20 1-2-9z" fill="#f0561e"/>
<path d="M905 528q-6-3-10 0-2 3 2 4l5 2q3 2 0 4-4 2-9-1" stroke="#fff" stroke-width="3"/>
<path d="M945 535a1.500 1.500 0 1 1 .1 0zM952 535q2 1 1 5" stroke="#1565c8" stroke-width="2" fill="#1565c8"/>
<circle cx="966" cy="537" r="6.500" fill="#1565c8"/><circle cx="963.500" cy="535.500" r="1" fill="#fff"/><circle cx="968.500" cy="535.500" r="1" fill="#fff"/><path d="M963 539q3 2.500 6 0" stroke="#fff"/>
<rect x="983.500" y="529" width="5" height="10" rx="2.500" fill="#1565c8"/><path d="M981 535q0 6 5 6t5-6M986 541v4h-3h6" stroke="#1565c8" stroke-width="1.300"/>
<rect x="1000.500" y="532.500" width="12" height="10" rx="1" stroke="#1565c8" stroke-width="1.300"/><path d="M1003 535.500h7M1003 538h7M1004 540.500h5" stroke="#1565c8" stroke-dasharray="1 1"/>
<path d="M1019 532l4-2 2 1 2-1 4 2 1 4-3 1v6h-8v-6l-3-1z" fill="#f0561e"/>
<rect x="1041" y="532" width="5" height="5" rx="1" fill="#1565c8"/><rect x="1048" y="532" width="5" height="5" rx="1" fill="#1565c8"/><rect x="1041" y="539" width="5" height="5" rx="1" fill="#1565c8"/><rect x="1048" y="539" width="5" height="5" rx="1" fill="#1565c8"/>
<circle cx="1068" cy="537" r="9" fill="#f3ece4"/><path d="M1060 535h13l-3 6h-7z" fill="#e2772c"/><circle cx="1063" cy="536.500" r="1" fill="#333"/><circle cx="1069" cy="536.500" r="1" fill="#333"/><circle cx="1076" cy="530" r="2" fill="#fde14a"/>
</svg>
<div class="t bd" style="left:918px;top:530px;font-size:14px;color:#1565c8">中</div>
</body></html>
